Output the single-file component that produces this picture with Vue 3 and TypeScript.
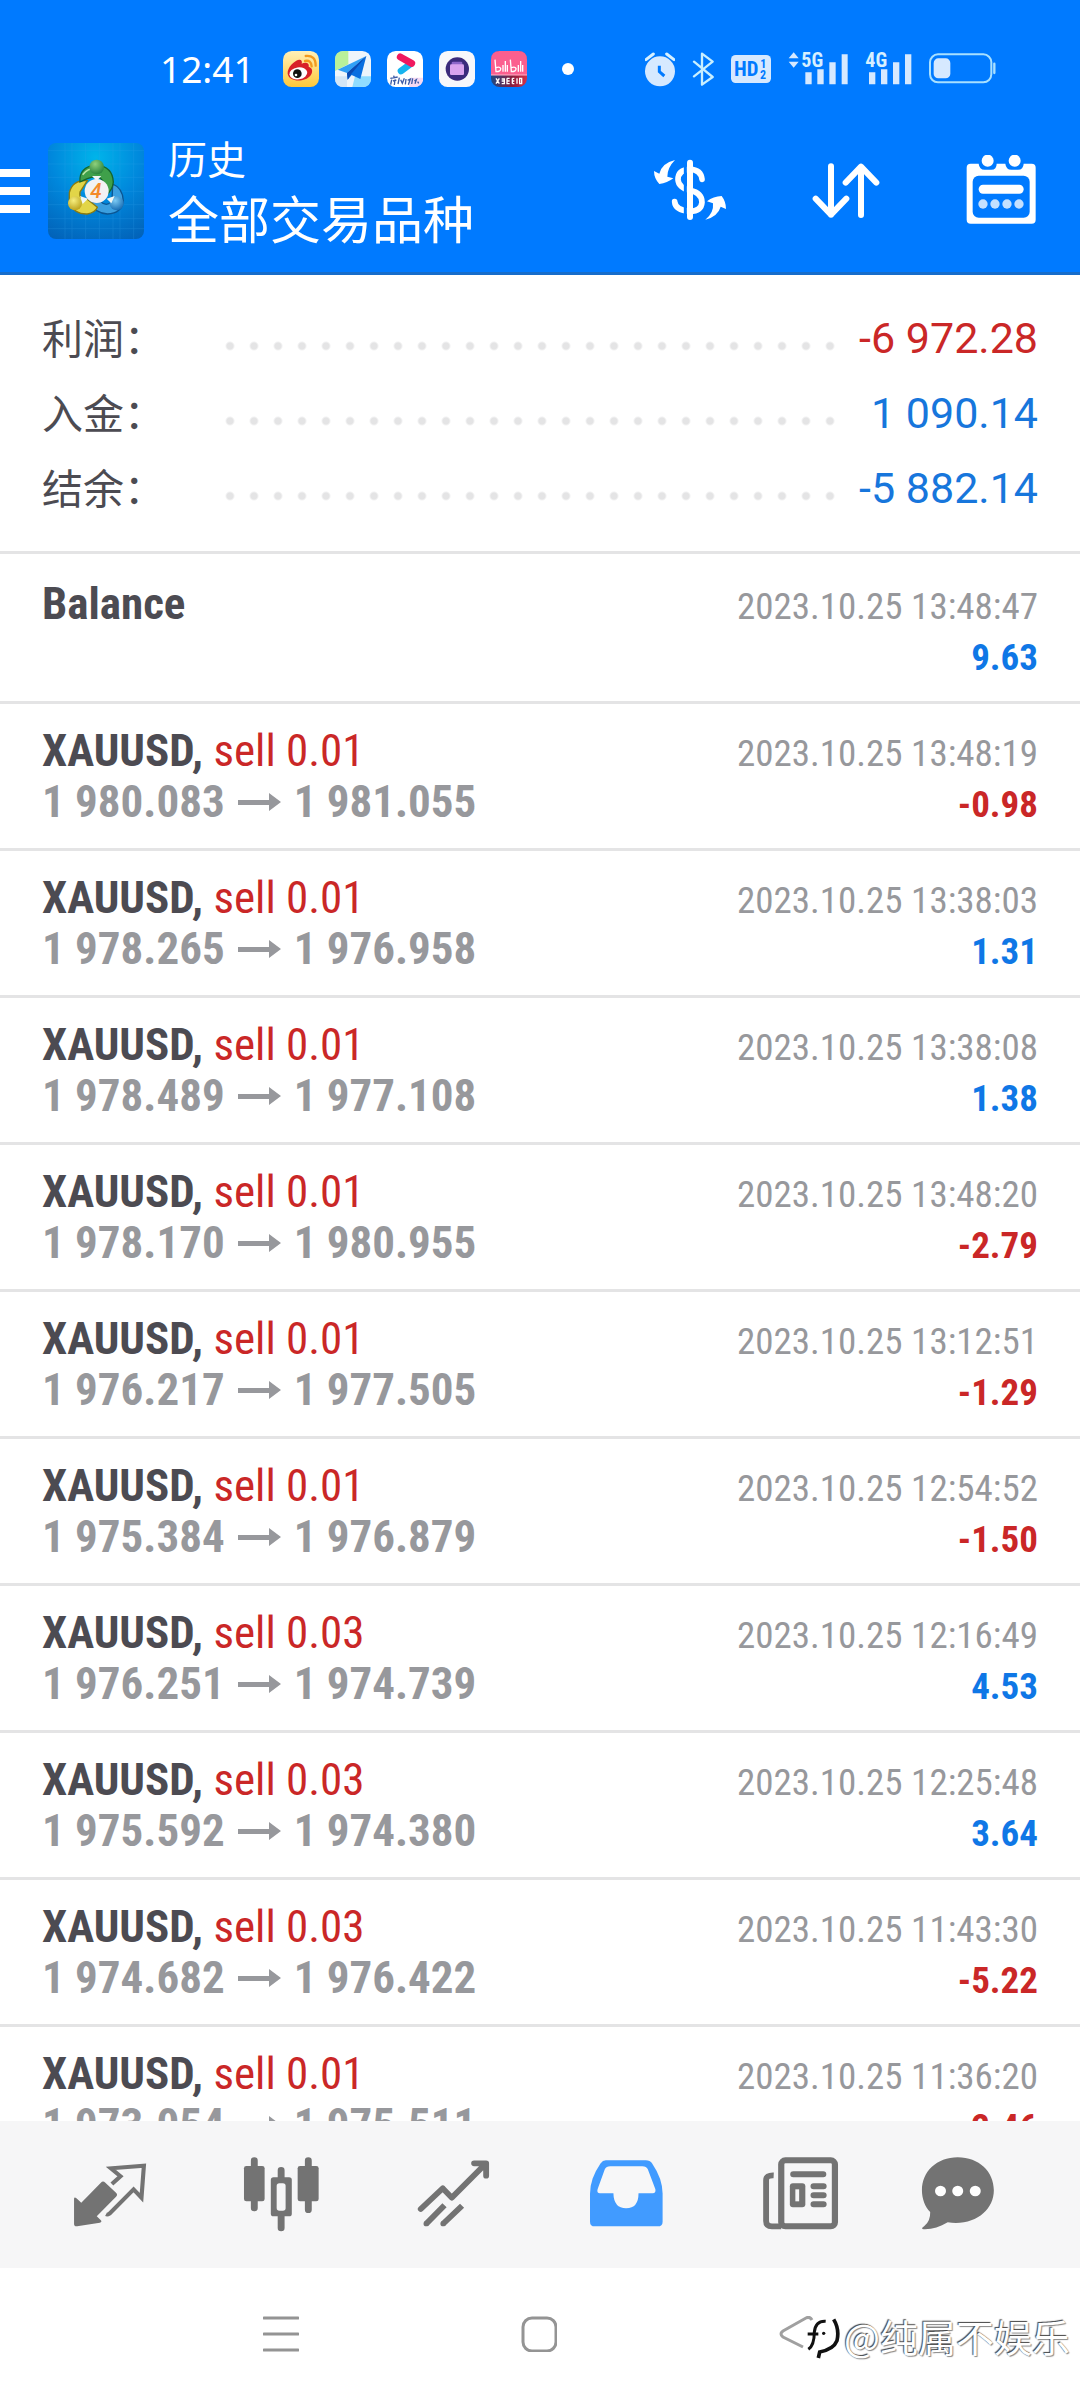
<script setup lang="ts">
interface Total {
  label: string
  value: string
  loss?: boolean
}

interface Deal {
  symbol: string
  side?: string
  open?: string
  close?: string
  time: string
  profit: string
}

const totals: Total[] = [
  { label: '利润：', value: '-6 972.28', loss: true },
  { label: '入金：', value: '1 090.14' },
  { label: '结余：', value: '-5 882.14' },
]

const deals: Deal[] = [
  { symbol: 'Balance', time: '2023.10.25 13:48:47', profit: '9.63' },
  { symbol: 'XAUUSD,', side: 'sell 0.01', open: '1 980.083', close: '1 981.055', time: '2023.10.25 13:48:19', profit: '-0.98' },
  { symbol: 'XAUUSD,', side: 'sell 0.01', open: '1 978.265', close: '1 976.958', time: '2023.10.25 13:38:03', profit: '1.31' },
  { symbol: 'XAUUSD,', side: 'sell 0.01', open: '1 978.489', close: '1 977.108', time: '2023.10.25 13:38:08', profit: '1.38' },
  { symbol: 'XAUUSD,', side: 'sell 0.01', open: '1 978.170', close: '1 980.955', time: '2023.10.25 13:48:20', profit: '-2.79' },
  { symbol: 'XAUUSD,', side: 'sell 0.01', open: '1 976.217', close: '1 977.505', time: '2023.10.25 13:12:51', profit: '-1.29' },
  { symbol: 'XAUUSD,', side: 'sell 0.01', open: '1 975.384', close: '1 976.879', time: '2023.10.25 12:54:52', profit: '-1.50' },
  { symbol: 'XAUUSD,', side: 'sell 0.03', open: '1 976.251', close: '1 974.739', time: '2023.10.25 12:16:49', profit: '4.53' },
  { symbol: 'XAUUSD,', side: 'sell 0.03', open: '1 975.592', close: '1 974.380', time: '2023.10.25 12:25:48', profit: '3.64' },
  { symbol: 'XAUUSD,', side: 'sell 0.03', open: '1 974.682', close: '1 976.422', time: '2023.10.25 11:43:30', profit: '-5.22' },
  { symbol: 'XAUUSD,', side: 'sell 0.01', open: '1 973.054', close: '1 975.511', time: '2023.10.25 11:36:20', profit: '-2.46' },
]
</script>

<template>
  <div class="screen">
    <header class="top">
      <div class="status">
        <span class="clock">12:41</span>
        <div class="apps">
          <svg viewBox="0 0 108 108" aria-hidden="true">
            <defs>
              <linearGradient id="wb" x1="0" y1="0" x2="0" y2="1"><stop offset="0" stop-color="#fff0b8" /><stop offset="1" stop-color="#ffc83a" /></linearGradient>
            </defs>
            <rect width="108" height="108" rx="26" fill="url(#wb)" />
            <path d="M14 68C12 50 34 28 48 26C56 25 58 32 56 38C66 33 80 34 77 47C90 51 90 64 82 74C66 94 18 94 14 68Z" fill="#d81f28" />
            <ellipse cx="46" cy="67" rx="27" ry="18" fill="#fff" transform="rotate(-8 46 67)" />
            <circle cx="43" cy="68" r="13" fill="#111" />
            <circle cx="39" cy="72" r="4" fill="#fff" />
            <path d="M66 30Q84 26 86 46M68 15Q98 12 98 44" fill="none" stroke="#f39a1e" stroke-width="7" stroke-linecap="round" />
          </svg>
          <svg viewBox="0 0 108 108" aria-hidden="true">
            <rect width="108" height="108" rx="26" fill="#eef5fb" />
            <path d="M26 0H40V40L0 60V26Q0 0 26 0Z" fill="#b9f19a" />
            <path d="M60 76H108V82Q108 108 82 108H52Z" fill="#8fdcff" />
            <path d="M0 76H36V108H26Q0 108 0 82Z" fill="#d3e6f6" />
            <path d="M94 15L8 56L36 66Z" fill="#31a0f6" />
            <path d="M94 15L36 66L38 86L50 72L76 84Z" fill="#0a6fe0" />
            <path d="M94 15L36 66L38 86L48 70Z" fill="#0a4cb4" />
          </svg>
          <svg viewBox="0 0 108 108" aria-hidden="true">
            <rect width="108" height="108" rx="26" fill="#fff" />
            <path d="M70 80H108V88Q104 108 82 108H66Z" fill="#f6d9f2" />
            <path d="M72 38L42 60" stroke="#16b4ef" stroke-width="20" stroke-linecap="round" />
            <path d="M40 18L74 37" stroke="#f0195f" stroke-width="21" stroke-linecap="round" />
            <path d="M10 82L32 78M20 74L22 82M14 86L11 101M18 90L28 87M24 86L22 102M37 80L33 99M41 86L46 97L52 82M57 84L55 100M62 88L70 84L64 101M77 82L74 99M82 90L88 86L84 98M92 92L95 97" fill="none" stroke="#3c5ba6" stroke-width="4" />
          </svg>
          <svg viewBox="0 0 108 108" aria-hidden="true">
            <rect width="108" height="108" rx="26" fill="#f7f7fb" />
            <circle cx="55" cy="54" r="35" fill="#3b2a7c" />
            <rect x="38" y="32" width="32" height="12" rx="4" fill="#8d66c9" />
            <rect x="33" y="40" width="42" height="32" rx="4" fill="#d9a3ee" />
          </svg>
          <svg viewBox="0 0 108 108" aria-hidden="true">
            <defs>
              <linearGradient id="bl" x1="0" x2="1"><stop offset="0" stop-color="#1b4a86" /><stop offset="0.6" stop-color="#8d1d3c" /><stop offset="1" stop-color="#d2324b" /></linearGradient>
            </defs>
            <rect width="108" height="108" rx="26" fill="url(#bl)" />
            <path d="M26 0H82Q108 0 108 26V72H0V26Q0 0 26 0Z" fill="#fb5f8f" />
            <path d="M0 72H108" stroke="#ffb4c8" stroke-width="3" />
            <path d="M12 26L15 62Q30 62 29 52Q26 46 15 50M36 42V62M43 30V62M49 42V62M58 26L61 62Q76 62 75 52Q72 46 61 50M82 42V62M89 30V62M95 42V62" fill="none" stroke="#fff" stroke-width="4" />
            <path d="M15 82L25 98M25 82L15 98M32 84H40V98H32M32 90H40M48 82V98H56M48 82H56M48 90H56M64 82V98M64 82H70M64 90H70M64 98H70M78 82V98M86 82V98H92V82Z" fill="none" stroke="#fff" stroke-width="4" />
          </svg>
        </div>
        <i class="more-dot"></i>
        <div class="signals">
          <svg width="30" height="36" viewBox="315 62 90 108" aria-hidden="true">
            <circle cx="360" cy="123" r="45" fill="#d6e9ff" />
            <path d="M318 88L340 71M402 88L380 71" stroke="#d6f0ff" stroke-width="9" stroke-linecap="round" />
            <path d="M358 106V124L373 137" fill="none" stroke="#007aff" stroke-width="9" />
          </svg>
          <svg width="22" height="36" viewBox="459 62 66 108" aria-hidden="true">
            <path d="M465 94L521 140L489 163V70L521 94L465 138" fill="none" stroke="#c8efff" stroke-width="7" stroke-linejoin="round" stroke-linecap="round" />
          </svg>
          <svg width="40" height="36" viewBox="588 66 120 108" role="img" aria-label="HD 1 2">
            <rect x="588" y="78" width="120" height="84" rx="14" fill="#d6e9ff" />
            <g fill="#007aff" font-family="Roboto Condensed, Roboto, sans-serif" font-weight="700">
              <text x="597" y="142" font-size="62">HD</text>
              <text x="676" y="117" font-size="36">1</text>
              <text x="675" y="151" font-size="36">2</text>
            </g>
          </svg>
          <svg width="60" height="36" viewBox="750 62 180 108" role="img" aria-label="5G">
            <path d="M752 84L767 66L782 84ZM752 94L767 112L782 94Z" fill="#d6e9ff" />
            <path d="M802 126H821V162H802ZM838 117H857V162H838ZM874 96H893V162H874ZM911 72H929V162H911Z" fill="#d6e9ff" />
            <text x="790" y="110" fill="#d6f0ff" font-size="60" font-weight="700" font-family="Roboto Condensed, Roboto, sans-serif">5G</text>
          </svg>
          <svg width="47" height="36" viewBox="979 62 141 108" role="img" aria-label="4G">
            <path d="M991 126H1010V162H991ZM1027 117H1046V162H1027ZM1063 96H1082V162H1063ZM1099 72H1118V162H1099Z" fill="#d6e9ff" />
            <text x="980" y="110" fill="#d6f0ff" font-size="60" font-weight="700" font-family="Roboto Condensed, Roboto, sans-serif">4G</text>
          </svg>
          <svg width="67" height="36" viewBox="1167 62 201 108" aria-hidden="true">
            <rect x="1170" y="72" width="184" height="84" rx="24" fill="none" stroke="#a8e0ff" stroke-width="6" />
            <rect x="1181" y="84" width="50" height="60" rx="14" fill="#d6e9ff" />
            <path d="M1363 100V128" stroke="#a8e0ff" stroke-width="7" stroke-linecap="round" />
          </svg>
        </div>
      </div>

      <div class="appbar">
        <button class="burger" type="button" aria-label="菜单">
          <svg width="30" height="44" viewBox="0 0 30 44"><path d="M0 0H30V8H0ZM0 18H30V26H0ZM0 36H30V44H0Z" fill="#fff" /></svg>
        </button>
        <svg class="logo" width="96" height="96" viewBox="144 69 288 288" aria-hidden="true">
          <defs>
            <radialGradient id="lg" cx="0.5" cy="0.15" r="0.95"><stop offset="0" stop-color="#00b4ea" /><stop offset="0.5" stop-color="#0087dc" /><stop offset="1" stop-color="#0262b8" /></radialGradient>
            <radialGradient id="gg" cx="0.4" cy="0.3" r="0.8"><stop offset="0" stop-color="#8fd07c" /><stop offset="1" stop-color="#1c7a35" /></radialGradient>
            <radialGradient id="gy" cx="0.4" cy="0.3" r="0.8"><stop offset="0" stop-color="#f6ee7e" /><stop offset="1" stop-color="#b59a12" /></radialGradient>
            <radialGradient id="gb" cx="0.4" cy="0.3" r="0.8"><stop offset="0" stop-color="#7ccaf4" /><stop offset="1" stop-color="#0c62ac" /></radialGradient>
          </defs>
          <rect x="144" y="69" width="288" height="288" rx="24" fill="url(#lg)" />
          <path d="M195 69V357M216 69V357M257 69V357M298 69V357M339 69V357M360 69V357M401 69V357M144 92H432M144 132H432M144 172H432M144 214H432M144 254H432M144 296H432M144 326H432" stroke="#39a8ef" stroke-width="2" opacity="0.3" />
          <path d="M338 192Q368 204 370 242Q366 280 322 282Q286 280 268 248L300 244Q320 262 336 244Z" fill="#3b9fdf" stroke="#0b5592" stroke-width="4" />
          <path d="M262 182Q218 178 208 218V250Q226 284 262 282Q286 278 292 262L262 238Q236 240 240 216Z" fill="#e2d548" stroke="#8a7a10" stroke-width="4" />
          <path d="M240 186Q236 142 288 134Q338 140 340 186Q338 210 318 226L312 190Q300 160 262 176Q250 182 240 186Z" fill="#3fa04a" stroke="#16662c" stroke-width="4" />
          <path d="M248 164Q266 140 300 146" fill="none" stroke="#b9e6a6" stroke-width="5" />
          <circle cx="290" cy="141" r="22" fill="url(#gg)" />
          <circle cx="225" cy="250" r="21" fill="url(#gy)" />
          <circle cx="350" cy="250" r="21" fill="url(#gb)" />
          <path d="M240 228L264 236L248 252ZM320 236L344 228L334 250ZM276 168H304L290 182Z" fill="#f1f6f3" />
          <circle cx="290" cy="213" r="36" fill="#f1f1f3" />
          <text x="288" y="234" text-anchor="middle" font-family="Roboto, sans-serif" font-size="62" font-weight="500" font-style="italic" fill="#f48a2a">4</text>
        </svg>
        <h1 class="titles">
          <span class="section">历史</span>
          <span class="scope">全部交易品种</span>
        </h1>
        <div class="actions">
          <button type="button" aria-label="货币">
            <svg width="72" height="72" viewBox="102 108 216 216">
              <path d="M246 181Q243 152 210 151Q174 152 174 182Q176 206 210 214Q246 222 246 250Q244 277 210 277Q166 274 164 248" fill="none" stroke="#fff" stroke-width="17" stroke-linecap="round" />
              <path d="M196 128V300" stroke="#007aff" stroke-width="9" />
              <path d="M210 131V294" stroke="#fff" stroke-width="18" stroke-linecap="round" />
              <path d="M165 123Q126 132 118 164L102 156Q102 178 118 195Q142 192 160 178L142 173Q142 146 165 123Z" fill="#fff" />
              <path d="M256 302Q282 282 279 253L261 247Q280 232 305 231Q318 248 318 270L302 263Q294 292 256 302Z" fill="#fff" />
            </svg>
          </button>
          <button type="button" aria-label="排序">
            <svg width="72" height="72" viewBox="570 106 216 216">
              <path d="M633 140V285M587 237L633 285L679 237M723 286V141M677 189L723 141L769 189" fill="none" stroke="#fff" stroke-width="18" stroke-linecap="round" stroke-linejoin="round" />
            </svg>
          </button>
          <button type="button" aria-label="日期">
            <svg width="72" height="72" viewBox="1036 106 216 216">
              <path d="M1050 132H1074Q1076 150 1092 150H1112Q1128 150 1128 132H1154Q1156 150 1172 150H1192Q1208 150 1209 132H1233Q1245 132 1245 144V300Q1245 312 1233 312H1050Q1038 312 1038 300V144Q1038 132 1050 132Z" fill="#fff" />
              <rect x="1056" y="168" width="171" height="126" rx="18" fill="#007aff" />
              <circle cx="1101" cy="123" r="18" fill="#fff" />
              <circle cx="1182" cy="123" r="18" fill="#fff" />
              <rect x="1074" y="195" width="135" height="27" rx="13" fill="#fff" />
              <g fill="#c4e0ff"><circle cx="1087" cy="253" r="14" /><circle cx="1123" cy="253" r="14" /><circle cx="1159" cy="253" r="14" /><circle cx="1195" cy="253" r="14" /></g>
            </svg>
          </button>
        </div>
      </div>
    </header>

    <dl class="totals">
      <div v-for="t in totals" :key="t.label" class="total">
        <dt>{{ t.label }}</dt>
        <span class="leader"></span>
        <dd :class="{ loss: t.loss }">{{ t.value }}</dd>
      </div>
    </dl>

    <ul class="deals">
      <li v-for="d in deals" :key="d.time" class="deal" :class="{ operation: !d.side }">
        <div class="line">
          <span><b>{{ d.symbol }}</b><span v-if="d.side" class="side">&nbsp;{{ d.side }}</span></span>
          <time>{{ d.time }}</time>
        </div>
        <div class="line">
          <span class="prices">
            <template v-if="d.open">
              <span>{{ d.open }}</span>
              <svg width="43" height="20" viewBox="0 0 43 20" aria-hidden="true"><path d="M0 8H31V1L43 10L31 19V13H0Z" fill="#97989c" /></svg>
              <span>{{ d.close }}</span>
            </template>
            <span v-else>&nbsp;</span>
          </span>
          <b class="profit" :class="{ loss: d.profit.startsWith('-') }">{{ d.profit }}</b>
        </div>
      </li>
    </ul>

    <nav class="tabs">
      <button type="button" aria-label="行情">
        <svg viewBox="180 410 279 288" preserveAspectRatio="none">
          <path d="M215 565Q216 558 222 564L236 577L293 517Q299 510 306 517L337 547Q343 553 337 559L281 618L293 630Q297 635 290 637L224 648Q215 649 215 640Z" fill="#737373" />
          <path d="M325 521L350 498L322 474L418 466L411 562L388 537L318 610Q312 614 308 612" fill="none" stroke="#737373" stroke-width="12" stroke-linejoin="miter" />
        </svg>
      </button>
      <button type="button" aria-label="图表">
        <svg viewBox="680 410 279 288" preserveAspectRatio="none">
          <path d="M739 451V593M896 451V598M817 480V505M817 615V653" stroke="#737373" stroke-width="20" stroke-linecap="round" />
          <rect x="709" y="467" width="60" height="106" rx="7" fill="#737373" />
          <rect x="865" y="467" width="61" height="106" rx="7" fill="#737373" />
          <rect x="787" y="501" width="61" height="117" rx="8" fill="#737373" />
          <rect x="804" y="519" width="26" height="82" rx="8" fill="#f6f6f7" />
        </svg>
      </button>
      <button type="button" aria-label="交易">
        <svg viewBox="1181 410 279 288" preserveAspectRatio="none">
          <path d="M1221 596L1285 534L1311 562L1408 462M1376 459H1411V496" fill="none" stroke="#737373" stroke-width="17" stroke-linecap="round" stroke-linejoin="round" />
          <path d="M1237 640L1290 585M1286 640L1341 586" stroke="#737373" stroke-width="17" />
          <circle cx="1237" cy="640" r="8" fill="#737373" /><circle cx="1286" cy="640" r="8" fill="#737373" />
        </svg>
      </button>
      <button type="button" aria-label="历史" aria-current="page">
        <svg viewBox="114 410 279 288" preserveAspectRatio="none">
          <path d="M192 450H308Q320 450 327 460Q357 505 357 550V634Q357 648 343 648H160Q146 648 146 634V550Q146 505 176 460Q183 450 192 450Z" fill="#419bff" />
          <path d="M205 468H298Q310 468 314 477L336 537Q338 549 328 549H287Q287 594 251 594Q215 594 214 549H175Q165 549 168 537L189 477Q193 468 205 468Z" fill="#f7f7f8" />
        </svg>
      </button>
      <button type="button" aria-label="新闻">
        <svg viewBox="614 410 279 288" preserveAspectRatio="none">
          <rect x="699" y="450" width="156" height="198" rx="12" fill="none" stroke="#737373" stroke-width="18" />
          <path d="M677 495Q655 494 655 510V632Q655 648 672 648H699" fill="none" stroke="#737373" stroke-width="17" />
          <path d="M734 492H821M793 528H822M793 555H822M793 582H822" stroke="#737373" stroke-width="18" stroke-linecap="round" />
          <rect x="724" y="519" width="45" height="72" rx="9" fill="#737373" />
          <rect x="740" y="537" width="11" height="36" fill="#f6f6f7" />
        </svg>
      </button>
      <button type="button" aria-label="消息">
        <svg viewBox="1115 410 279 288" preserveAspectRatio="none" overflow="visible">
          <path d="M1213 441C1275 441 1318 484 1318 540C1318 600 1262 648 1184 636C1160 650 1138 658 1114 657Q1104 656 1116 647Q1134 632 1133 605C1118 590 1109 566 1109 540C1109 484 1152 441 1213 441Z" fill="#737373" />
          <g fill="#fff"><circle cx="1163" cy="542" r="16" /><circle cx="1213" cy="542" r="16" /><circle cx="1264" cy="542" r="16" /></g>
        </svg>
      </button>
    </nav>

    <nav class="system">
      <button type="button" aria-label="最近任务">
        <svg width="36" height="36" viewBox="0 0 36 36"><path d="M1 2H35M1 18H35M1 34H35" stroke="#949494" stroke-width="3" stroke-linecap="round" /></svg>
      </button>
      <button type="button" aria-label="主屏幕">
        <svg width="36" height="36" viewBox="0 0 36 36"><rect x="2" y="2" width="33" height="33" rx="9" fill="none" stroke="#949494" stroke-width="3" /></svg>
      </button>
      <button type="button" aria-label="返回">
        <svg width="36" height="36" viewBox="0 0 36 36"><path d="M33 4Q31 0 27 2L4 15Q0 18 4 21L24 31" fill="none" stroke="#a0a0a0" stroke-width="3" /></svg>
      </button>
      <div class="watermark">
        <svg width="33" height="48" viewBox="0 0 99 144" aria-hidden="true">
          <path d="M4 112Q22 100 22 60Q26 26 56 28" fill="none" stroke="#111" stroke-width="9" />
          <path d="M2 66H34" stroke="#111" stroke-width="9" />
          <path d="M80 22Q98 52 90 86Q80 112 38 120L34 138" fill="none" stroke="#111" stroke-width="11" />
          <circle cx="50" cy="64" r="5" fill="#111" />
        </svg>
        <span>@纯属不娱乐</span>
      </div>
    </nav>
  </div>
</template>

<style>
body {
  margin: 0;
  background: #fff;
}
</style>

<style scoped>
.screen {
  display: flex;
  flex-direction: column;
  height: 100vh;
  background: #fff;
  color: #4c4b52;
  font-family: Roboto, 'Noto Sans CJK SC', sans-serif;
  overflow: hidden;
}

button {
  display: block;
  padding: 0;
  border: 0;
  background: none;
}

svg {
  display: block;
  flex: none;
}

.top {
  flex: none;
  background: #007aff;
  border-bottom: 3px solid #176dca;
  color: #fff;
}

.status {
  display: flex;
  align-items: center;
  height: 70px;
  padding: 34px 84px 0 160px;
}

.clock {
  width: 123px;
  font: 37px/40px 'Noto Sans', sans-serif;
}

.apps {
  display: flex;
  gap: 16px;
}

.apps svg {
  width: 36px;
  height: 36px;
}

.more-dot {
  width: 12px;
  height: 12px;
  margin-left: 35px;
  border-radius: 50%;
  background: #fff;
}

.signals {
  display: flex;
  align-items: center;
  gap: 17px;
  margin-left: auto;
}

.appbar {
  display: flex;
  align-items: center;
  height: 162px;
  padding: 6px 42px 0 0;
}

.burger {
  margin-right: 18px;
}

.titles {
  display: flex;
  flex-direction: column;
  margin: 0 0 4px 24px;
  font-weight: 400;
  font-family: 'Noto Sans CJK SC', sans-serif;
}

.section {
  font-size: 39px;
  line-height: 56px;
}

.scope {
  font-size: 51px;
  line-height: 64px;
}

.actions {
  display: flex;
  gap: 84px;
  margin-left: auto;
}

.totals {
  flex: none;
  margin: 0;
  padding: 26px 42px 25px;
}

.total {
  display: flex;
  height: 75px;
  font-size: 43px;
  line-height: 75px;
}

.total dt {
  width: 176px;
  font-size: 41px;
  line-height: 70px;
  font-family: 'Noto Sans CJK SC', sans-serif;
}

.leader {
  flex: 1;
  background: radial-gradient(circle at 12px 45px, #e4e4e5 3px, transparent 5px) 0 0 / 24px 75px;
}

.total dd {
  width: 196px;
  margin: 0;
  text-align: right;
  color: #1776dc;
}

.deals {
  flex: 1;
  min-height: 0;
  margin: 0;
  padding: 0;
  overflow: hidden;
  list-style: none;
  font-family: 'Roboto Condensed', 'Liberation Sans Narrow', Roboto, sans-serif;
}

.deal {
  padding: 21px 42px;
  border-top: 3px solid #e4e4e5;
}

.deal.operation {
  padding-top: 24px;
}

.line {
  display: flex;
  justify-content: space-between;
  align-items: baseline;
  height: 51px;
  font-size: 45px;
  line-height: 51px;
  white-space: nowrap;
}

.side {
  color: #ca2727;
}

.prices {
  display: flex;
  align-items: center;
  gap: 13px;
  font-weight: 700;
  color: #97989c;
}

time {
  font-size: 37px;
  color: #97989c;
}

.profit {
  font-size: 37px;
  color: #0f77e6;
}

.total .loss,
.deal .loss {
  color: #ca2727;
}

.tabs {
  display: flex;
  flex: none;
  justify-content: space-between;
  align-items: center;
  height: 147px;
  padding: 0 60px 0 62px;
  background: #f6f6f7;
}

.tabs svg {
  width: 96px;
  height: 96px;
}

.system {
  position: relative;
  display: flex;
  flex: none;
  justify-content: space-between;
  align-items: center;
  height: 132px;
  padding: 0 265px 0 263px;
}

.watermark {
  position: absolute;
  right: 10px;
  bottom: 36px;
  display: flex;
  align-items: center;
  gap: 4px;
  color: #fff;
  font: 38px/56px 'Noto Sans CJK SC', sans-serif;
  text-shadow: -1px -1px 1px #444, 1px 1px 1px #888;
}
</style>
